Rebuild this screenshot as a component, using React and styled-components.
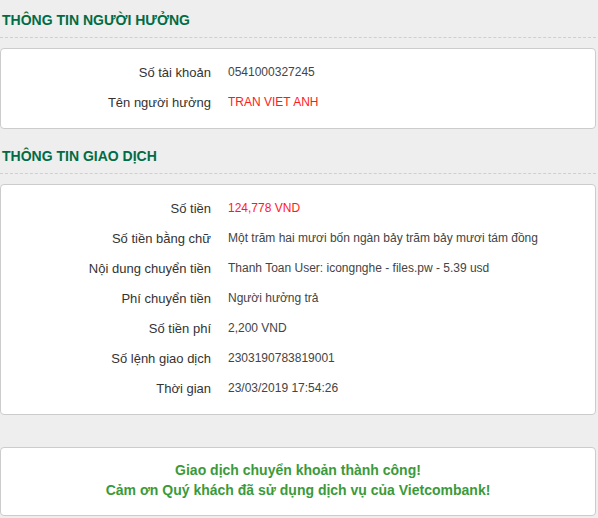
import React from "react";
import styled, { createGlobalStyle } from "styled-components";

const Global = createGlobalStyle`
  html, body { margin: 0; padding: 0; background: #eeeeee; }
  body { font-family: Arial, "Liberation Sans", sans-serif; }
`;

const Page = styled.div`
  width: 598px;
  padding-bottom: 2px;
`;

const Section = styled.section`
  margin-top: ${(p) => p.$gap || 0}px;
`;

const Title = styled.h2`
  margin: 0 2px 10px 0;
  padding: 11px 0 8px 2px;
  font-size: 14px;
  line-height: 18px;
  font-weight: bold;
  color: #006c45;
  border-bottom: 1px dashed #cfcfcf;
  text-transform: uppercase;
`;

const Card = styled.div`
  margin-right: 2px;
  background: #fff;
  border: 1px solid #cccccc;
  border-radius: 4px;
  padding: ${(p) => p.$pad || "8px 0 11px"};
  box-sizing: border-box;
`;

const Row = styled.div`
  display: flex;
  align-items: center;
  height: 30px;
`;

const Label = styled.div`
  width: 210px;
  flex: none;
  text-align: right;
  font-size: 13px;
  color: #333;
`;

const Value = styled.div`
  padding-left: 17px;
  font-size: 12px;
  color: ${(p) => (p.$red ? "#ff1a1a" : "#444")};
`;

const Message = styled.div`
  text-align: center;
  color: #3a9a3a;
  font-weight: bold;
  font-size: 14px;
  line-height: 20px;
`;

const beneficiary = [
  ["Số tài khoản", "0541000327245"],
  ["Tên người hưởng", "TRAN VIET ANH", true],
];

const transaction = [
  ["Số tiền", "124,778 VND", true],
  ["Số tiền bằng chữ", "Một trăm hai mươi bốn ngàn bảy trăm bảy mươi tám đồng"],
  ["Nội dung chuyển tiền", "Thanh Toan User: icongnghe - files.pw - 5.39 usd"],
  ["Phí chuyển tiền", "Người hưởng trả"],
  ["Số tiền phí", "2,200 VND"],
  ["Số lệnh giao dịch", "2303190783819001"],
  ["Thời gian", "23/03/2019 17:54:26"],
];

const Rows = ({ items }) =>
  items.map(([label, value, red]) => (
    <Row key={label}>
      <Label>{label}</Label>
      <Value $red={red}>{value}</Value>
    </Row>
  ));

export default function App() {
  return (
    <Page>
      <Global />
      <Section>
        <Title>Thông tin người hưởng</Title>
        <Card>
          <Rows items={beneficiary} />
        </Card>
      </Section>
      <Section $gap={7}>
        <Title>Thông tin giao dịch</Title>
        <Card>
          <Rows items={transaction} />
        </Card>
      </Section>
      <Section $gap={32}>
        <Card $pad="12px 0 15px">
          <Message>Giao dịch chuyển khoản thành công!</Message>
          <Message>Cảm ơn Quý khách đã sử dụng dịch vụ của Vietcombank!</Message>
        </Card>
      </Section>
    </Page>
  );
}
